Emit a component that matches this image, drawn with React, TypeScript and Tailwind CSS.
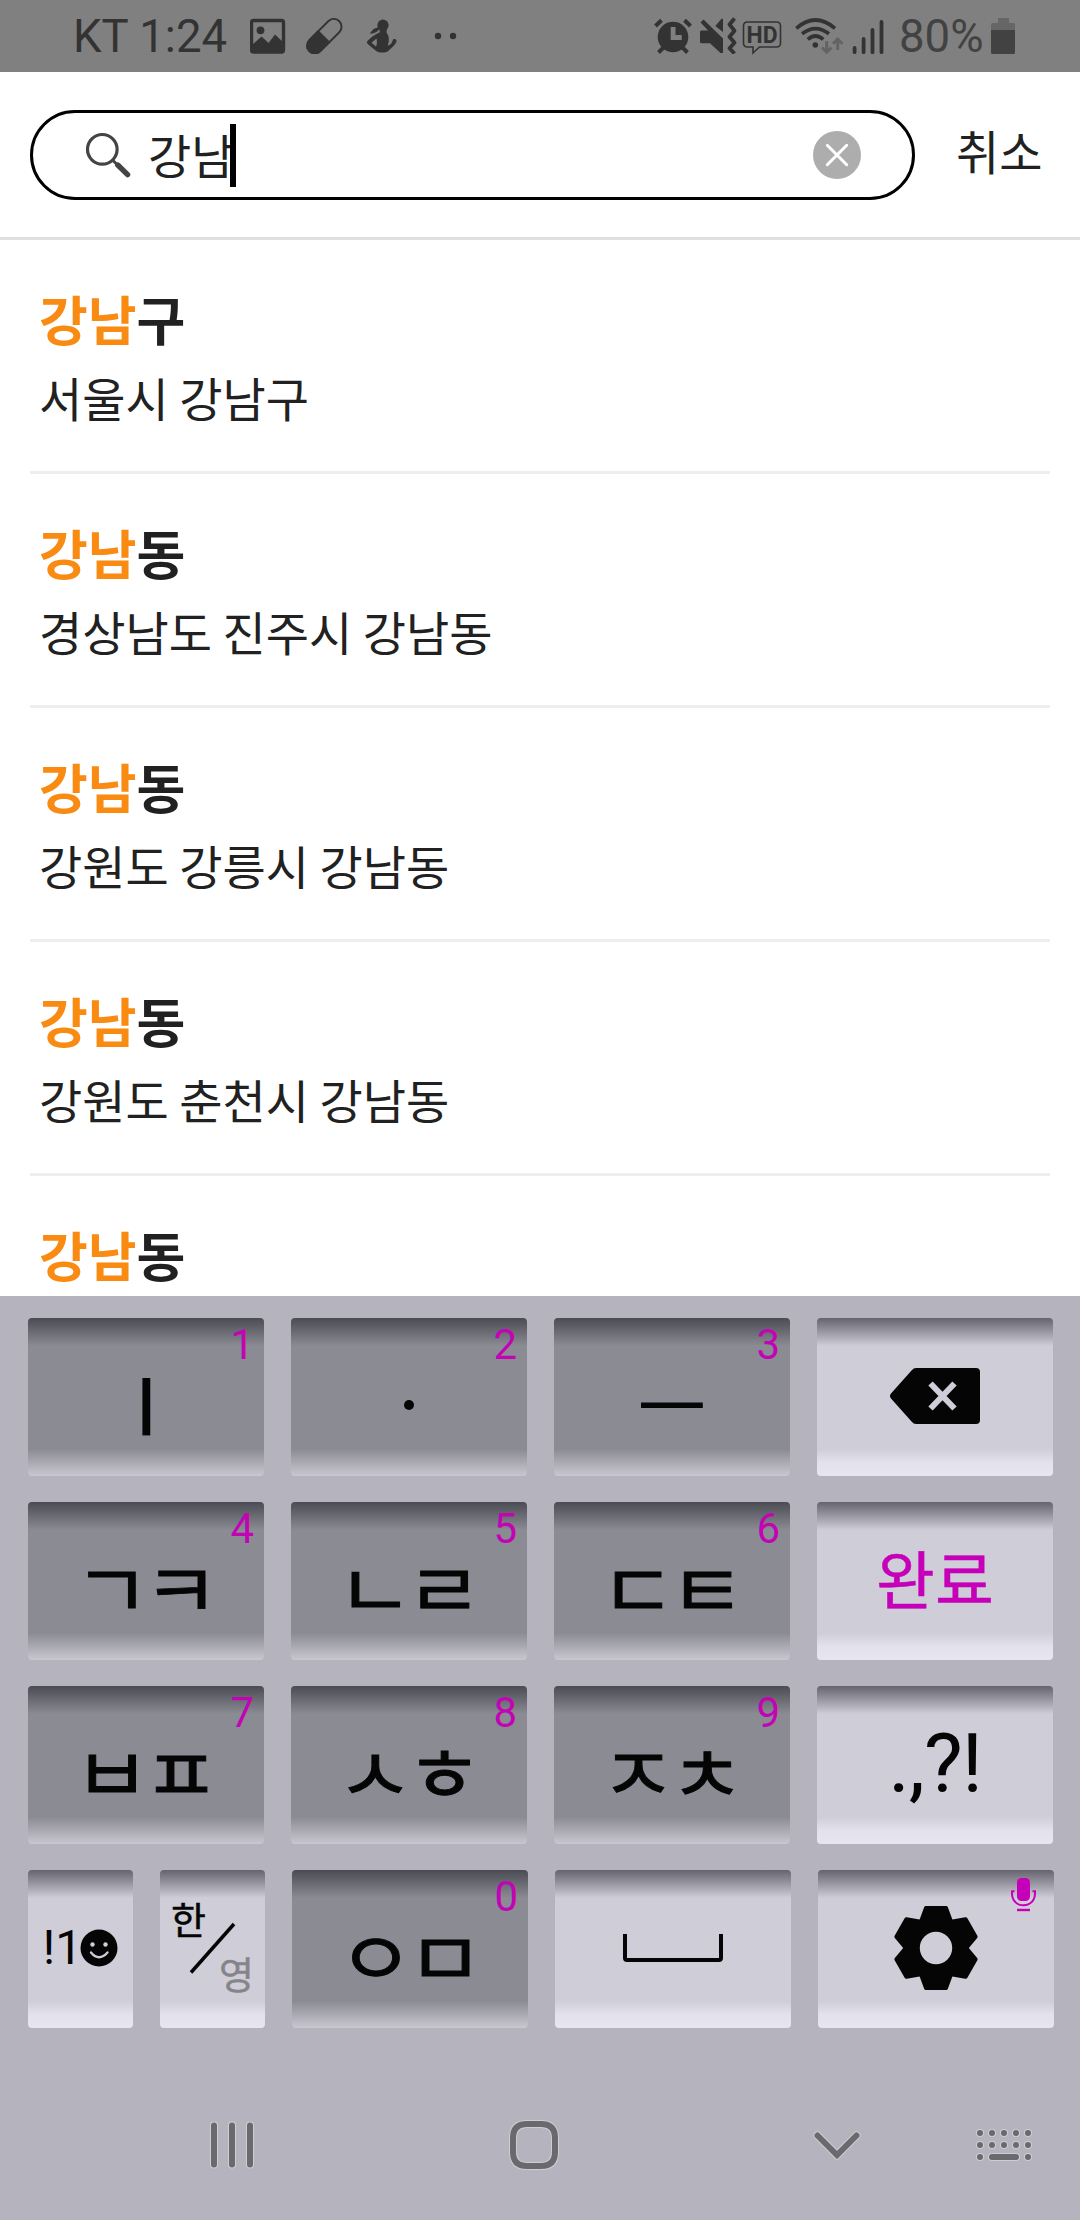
import type { ReactNode } from "react";

const INK = "#333333";

function StatusBar() {
  return (
    <div className="flex h-[72px] shrink-0 items-start bg-[#808080] font-[Roboto,sans-serif] text-[45.600px] leading-[53px] text-[#333333]">
      <span className="mt-[10px] ml-[73px] w-[177px] whitespace-pre">KT 1:24</span>
      <svg className="mt-[18px] w-[36px]" height="36" viewBox="250 18 36 36">
        <rect x="251.5" y="20.5" width="32" height="31.5" rx="2" fill="none" stroke={INK} strokeWidth="3.4" />
        <circle cx="260.5" cy="30.3" r="3.9" fill={INK} />
        <path d="M252 45l9.500-8.500 7 6.500 6.500-8.500 9 8.500v10h-32z" fill={INK} />
      </svg>
      <svg className="mt-[18px] ml-[20px] w-[37px]" height="36" viewBox="306 18 37 36">
        <g transform="translate(324.300 36.200) rotate(-45)">
          <rect x="-21.200" y="-7.800" width="42.400" height="15.600" rx="7.800" fill="none" stroke={INK} strokeWidth="1.900" />
          <path d="M0-8.700V8.700H-13.400A8.700 8.700 0 0 1-13.400-8.700Z" fill={INK} />
        </g>
      </svg>
      <svg className="mt-[18px] ml-[23px] w-[32px]" height="36" viewBox="366 18 32 36">
        <g fill={INK}>
          <ellipse cx="383" cy="25.300" rx="5.600" ry="5.800" />
          <path d="M379.500 27c-3 .4-6.500 1.300-9.800 6.800 3.200-.5 6.800-.2 9.800-5z" />
          <path
            fillRule="evenodd"
            d="M380 29l6.500 0 .2 4c2.500 3 2.800 8 1 12.500 2.800-.5 4.500-2 5-5.200.4-2 4.300-1.600 3.800 1-.6 3.200-4.500 6-8.500 10-2.200 1.600-9.200 1.600-11.500 0l-8.800-7.300c-1.200-1.200-1-2.200 0-3.200 3-3 6.800-6.500 11.800-8.300zM376.500 38.500l-5 4.300 4.500 3.700c1.300-2.800 1-5 .5-8z"
          />
        </g>
      </svg>
      <svg className="mt-[30px] ml-[36px] w-[24px]" height="12" viewBox="434 30 24 12">
        <circle cx="438" cy="36" r="3.200" fill={INK} />
        <circle cx="453" cy="36" r="3.200" fill={INK} />
      </svg>
      <svg className="mt-[16px] ml-[195px] w-[40px]" height="38" viewBox="653 16 40 38">
        <circle cx="673" cy="37" r="15.300" fill={INK} />
        <path d="M655.500 26l6-5.800M690.500 26l-6-5.800M658.500 52.500l5-5M687.500 52.500l-5-5" stroke={INK} strokeWidth="4" />
        <path d="M670.700 27h4.800v8h6.200v5h-11z" fill="#808080" />
      </svg>
      <svg className="mt-[16px] ml-[6px] w-[38px]" height="38" viewBox="699 16 38 38">
        <path d="M703.500 19.500L723 38.500V53h-2.500l-10.500-9.700h-8.500q-1.500 0-1.500-1.500v-9.800q0-1.500 1.500-1.500h6.700L700.500 22.500zM715.300 26l6-7q1.700-1.200 1.700 0v13z" fill={INK} />
        <path d="M734.500 18.500l-5 6 5 6.200-5 6.100 5 6-5 5.400 5 5.300" fill="none" stroke={INK} strokeWidth="3.800" strokeLinejoin="round" />
      </svg>
      <svg className="mt-[18px] ml-[5px] w-[40px]" height="37" viewBox="742 18 40 37">
        <path d="M747.500 22h29q4 0 4 4v17q0 4-4 4h-17l-6.500 6v-6h-5.500q-4 0-4-4V26q0-4 4-4z" fill="none" stroke={INK} strokeWidth="1.600" />
        <text x="746.500" y="43" fontSize="24.500" fontWeight="700" fill={INK} textLength="31" lengthAdjust="spacingAndGlyphs">HD</text>
      </svg>
      <svg className="mt-[16px] ml-[12px] w-[52px]" height="40" viewBox="794 16 52 40">
        <g fill="none" stroke={INK} strokeWidth="3.700">
          <path d="M796.300 28.300q19-16.600 38.700 0M802 33.800q13.500-10.500 27 0M807.800 39.300q7.600-6.600 15.500 0" />
        </g>
        <circle cx="815.300" cy="45" r="2.800" fill={INK} />
        <path d="M826.700 41v11M822 47.500l4.700 4.700 4.700-4.700M837.700 50V39.500M833 43.800l4.700-4.700 4.700 4.700" fill="none" stroke="#636363" strokeWidth="3" />
      </svg>
      <svg className="mt-[18px] ml-[6px] w-[34px]" height="38" viewBox="852 18 34 38">
        <path d="M854.600 48v4.200M863.600 39v13.200M872.500 30v22.200M881.500 22v30.200" stroke={INK} strokeWidth="3.800" strokeLinecap="round" />
      </svg>
      <span className="mt-[10px] ml-[13px] w-[92px] whitespace-nowrap text-[#424242]">80%</span>
      <svg className="mt-[18px] w-[24px]" height="36" viewBox="991 18 24 36">
        <path d="M998 18h11v5h4.500q1.500 0 1.500 1.500V31h-24v-6.500q0-1.500 1.500-1.500h5.500z" fill="#666666" />
        <path d="M991 30h24v22.500q0 1.500-1.500 1.500h-21q-1.500 0-1.500-1.500z" fill="#424242" />
      </svg>
    </div>
  );
}

function SearchHeader() {
  return (
    <header className="flex h-[168px] shrink-0 items-start border-b-[3px] border-[#e0e0e0] pt-[38px] pl-[30px]">
      <div className="flex h-[90px] w-[885px] items-center rounded-full border-[3px] border-black">
        <svg className="ml-[52px] shrink-0" width="46" height="46" viewBox="85 132 46 46">
          <circle cx="102.300" cy="149.300" r="14.800" fill="none" stroke="#444444" strokeWidth="3.200" />
          <path d="M112.500 160l5 5" stroke="#444444" strokeWidth="3" />
          <path d="M117.800 165l9.800 9.600" stroke="#444444" strokeWidth="5.400" strokeLinecap="round" />
        </svg>
        <span className="-mt-[2px] ml-[17px] text-[47px] leading-[68px] text-[#212121]">강남</span>
        <div className="-ml-[4px] h-[63px] w-[6px] bg-black" />
        <svg className="mr-[51px] ml-auto" width="48" height="48" viewBox="0 0 48 48">
          <circle cx="24" cy="24" r="24" fill="#adadad" />
          <path d="M14.300 14.300l19.400 19.400M33.700 14.300L14.300 33.700" stroke="#fff" strokeWidth="3" strokeLinecap="round" />
        </svg>
      </div>
      <span className="mt-[6px] ml-[41px] text-[47px] leading-[68px] text-[#212121]">취소</span>
    </header>
  );
}

const RESULTS = [
  ["구", "서울시 강남구"],
  ["동", "경상남도 진주시 강남동"],
  ["동", "강원도 강릉시 강남동"],
  ["동", "강원도 춘천시 강남동"],
  ["동"],
];

function Results() {
  return (
    <main className="h-[1056px] shrink-0 overflow-hidden px-[30px] text-[#212121]">
      {RESULTS.map(([tail, address], i) => (
        <div key={i} className="h-[234px] border-b-[3px] border-[#eeeeee] pt-[39px] pl-[9px]">
          <div className="text-[53px] leading-[78px] font-bold">
            <span className="text-[#f98b12]">강남</span>
            {tail}
          </div>
          {address && <div className="mt-px text-[47px] leading-[78px]">{address}</div>}
        </div>
      ))}
    </main>
  );
}

function Key({ dark, half, hint, children }: { dark?: boolean; half?: boolean; hint?: ReactNode; children: ReactNode }) {
  const tone = dark
    ? "bg-[linear-gradient(to_bottom,#4b4b53_0px,#8b8b93_28px,#8b8b93_131px,#c9c8d2_158px)]"
    : "bg-[linear-gradient(to_bottom,#65646e_0px,#cfcdd7_28px,#cfcdd7_131px,#e3e2ec_144px,#e7e5f0_158px)]";
  return (
    <div className={`relative flex h-[158px] items-center justify-center rounded-[4px] ${half ? "w-[105px]" : "w-[236px]"} ${tone}`}>
      {children}
      {hint && <div className="absolute top-0 right-[10px] text-[#c204b4]">{hint}</div>}
    </div>
  );
}

function Digit({ children }: { children: string }) {
  return <span className="block pt-[2px] font-[Roboto,sans-serif] text-[42px] leading-[50px]">{children}</span>;
}

function Consonants({ digit, children }: { digit: string; children: string }) {
  return (
    <Key dark hint={<Digit>{digit}</Digit>}>
      <span className="-translate-x-[3px] translate-y-[5px] scale-y-[0.9] text-[83px] leading-[50px] tracking-[-7px] whitespace-nowrap text-[#050505] [-webkit-text-stroke:1px_#050505]">
        {children}
      </span>
    </Key>
  );
}

function Vowel({ digit, children }: { digit: string; children: string }) {
  return (
    <Key dark hint={<Digit>{digit}</Digit>}>
      <span className="translate-y-[6px] scale-y-[0.85] text-[75px] leading-[50px] font-medium text-[#050505]">{children}</span>
    </Key>
  );
}

const TOOTH = "M-15.500-25L-10-40H10L15.500-25L0 0Z";

function Keyboard() {
  return (
    <section className="flex h-[774px] shrink-0 flex-col gap-[26px] pt-[22px] pl-[28px]">
      <div className="flex gap-[27px]">
        <Vowel digit="1">ㅣ</Vowel>
        <Key dark hint={<Digit>2</Digit>}>
          <span className="mt-[16px] size-[10px] rounded-full bg-[#050505]" />
        </Key>
        <Vowel digit="3">ㅡ</Vowel>
        <Key>
          <svg className="mb-[2px]" width="92" height="58" viewBox="0 0 92 58">
            <path d="M27 1H87q4 0 4 4V53q0 4-4 4H27q-2.500 0-4-2L2 31.500q-2-2.500 0-5L23 3q1.500-2 4-2z" fill="#050505" />
            <path d="M41.500 16.500l24 25M65.500 16.500l-24 25" stroke="#cfcdd7" strokeWidth="6" />
          </svg>
        </Key>
      </div>
      <div className="flex gap-[27px]">
        <Consonants digit="4">ㄱㅋ</Consonants>
        <Consonants digit="5">ㄴㄹ</Consonants>
        <Consonants digit="6">ㄷㅌ</Consonants>
        <Key>
          <span className="mb-[10px] text-[64px] leading-[90px] text-[#c500b8] [-webkit-text-stroke:0.5px_#c500b8]">완료</span>
        </Key>
      </div>
      <div className="flex gap-[27px]">
        <Consonants digit="7">ㅂㅍ</Consonants>
        <Consonants digit="8">ㅅㅎ</Consonants>
        <Consonants digit="9">ㅈㅊ</Consonants>
        <Key>
          <span className="mb-[2px] font-[Roboto,sans-serif] text-[82px] leading-[94px] tracking-[-1px] text-[#050505]">.,?!</span>
        </Key>
      </div>
      <div className="flex gap-[27px]">
        <Key half>
          <div className="mb-[2px] flex items-center text-[#050505]">
            <span className="font-[Roboto,sans-serif] text-[48px] leading-[56px]">!1</span>
            <svg className="-ml-[2px]" width="38" height="38" viewBox="0 0 38 38">
              <circle cx="19" cy="19" r="18.500" fill="#050505" />
              <circle cx="12.500" cy="15.500" r="2.200" fill="#cfcdd7" />
              <circle cx="25.500" cy="15.500" r="2.200" fill="#cfcdd7" />
              <path d="M11 23.500q8 9.500 16.500 0" fill="none" stroke="#cfcdd7" strokeWidth="2.400" strokeLinecap="round" />
            </svg>
          </div>
        </Key>
        <Key half>
          <span className="absolute top-[21px] left-[11px] text-[38px] leading-[54px] text-[#050505] [-webkit-text-stroke:0.5px_#050505]">한</span>
          <svg className="absolute top-[52px] left-[29px]" width="48" height="52" viewBox="0 0 48 52">
            <path d="M2 50.500L45 2" stroke="#050505" strokeWidth="3.500" />
          </svg>
          <span className="absolute top-[76px] left-[59px] text-[38px] leading-[54px] text-[#858489] [-webkit-text-stroke:0.5px_#858489]">영</span>
        </Key>
        <Consonants digit="0">ㅇㅁ</Consonants>
        <Key>
          <svg className="mb-[2px]" width="100" height="28" viewBox="0 0 100 28">
            <path d="M2 0V24q0 2 2 2H96q2 0 2-2V0" fill="none" stroke="#050505" strokeWidth="4" />
          </svg>
        </Key>
        <Key
          hint={
            <svg className="mt-[7px] mr-[7px]" width="27" height="35" viewBox="1010 1877 27 35">
              <rect x="1017" y="1878" width="13" height="23" rx="4.500" fill="#c500b8" />
              <path d="M1014.500 1891.300h-2.500v2c0 7 4.500 12 11.500 12s11.500-5 11.500-12v-2h-2.500" fill="none" stroke="#c500b8" strokeWidth="2" />
              <path d="M1017 1910h13" stroke="#c500b8" strokeWidth="2.400" />
            </svg>
          }
        >
          <svg className="mb-[2px]" width="88" height="88" viewBox="-44 -44 88 88">
            {[0, 60, 120, 180, 240, 300].map((angle) => (
              <path key={angle} d={TOOTH} transform={`rotate(${angle})`} fill="#050505" stroke="#050505" strokeWidth="4" strokeLinejoin="round" />
            ))}
            <circle r="16.200" fill="#cfcdd7" />
          </svg>
        </Key>
      </div>
    </section>
  );
}

const DOT_COLUMNS = [980, 992, 1004, 1016, 1028];

function NavGlyph({ d }: { d: string }) {
  return (
    <g fill="none" strokeLinecap="round">
      <path d={d} stroke="#cfcdd4" strokeWidth="8" />
      <path d={d} stroke="#6a696e" strokeWidth="6" />
    </g>
  );
}

function NavBar() {
  const dots = DOT_COLUMNS.map((x) => `M${x} 2133h.01M${x} 2145h.01`).join("");
  return (
    <nav className="flex h-[150px] shrink-0 items-center">
      <svg className="ml-[208px]" width="48" height="56" viewBox="208 2117 48 56">
        <NavGlyph d="M214 2125.500v39M232 2125.500v39M250 2125.500v39" />
      </svg>
      <svg className="ml-[250px]" width="56" height="56" viewBox="506 2117 56 56">
        <NavGlyph d="M527 2124h14q14 0 14 14v14q0 14-14 14h-14q-14 0-14-14v-14q0-14 14-14z" />
      </svg>
      <svg className="ml-[250px]" width="50" height="56" viewBox="812 2117 50 56">
        <NavGlyph d="M817.500 2135.500l19.500 19.500 19.500-19.500" />
      </svg>
      <svg className="ml-[112px]" width="60" height="56" viewBox="974 2117 60 56">
        <NavGlyph d={`${dots}M980 2157h.01M1028 2157h.01M992 2157h24`} />
      </svg>
    </nav>
  );
}

export default function App() {
  return (
    <div className="flex h-[2220px] w-[1080px] flex-col overflow-hidden bg-white font-['Noto_Sans_CJK_KR',sans-serif]">
      <StatusBar />
      <SearchHeader />
      <Results />
      <div className="bg-[#b5b3bd]">
        <Keyboard />
        <NavBar />
      </div>
    </div>
  );
}
